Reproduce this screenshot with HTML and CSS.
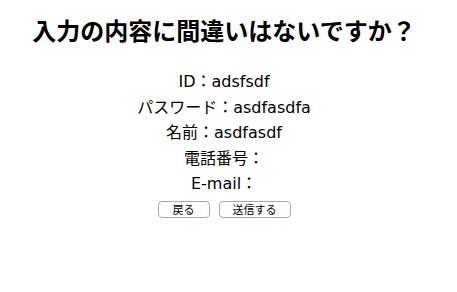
FILE: index.html
```html
<!DOCTYPE html>
<html lang="ja">
<head>
<meta charset="utf-8">
<link rel="stylesheet" href="styles.css">
</head>
<body>
<h1 class="title">入力の内容に間違いはないですか？</h1>
<div class="fields">
  <div class="row">ID：adsfsdf</div>
  <div class="row">パスワード：asdfasdfa</div>
  <div class="row">名前：asdfasdf</div>
  <div class="row">電話番号：</div>
  <div class="row">E-mail：</div>
</div>
<div class="actions">
  <button class="btn btn-back">戻る</button>
  <button class="btn btn-send">送信する</button>
</div>
</body>
</html>
```
FILE: styles.css
```css
body {
  margin: 0 17px 0 8px;
  padding-top: 15px;
  font-family: "DejaVu Sans", "Noto Sans CJK JP", sans-serif;
  color: #000;
  background: #fff;
}
.title {
  font-family: "Noto Sans CJK JP", sans-serif;
  font-size: 24px;
  font-weight: bold;
  text-align: center;
  margin: 0;
  line-height: 30px;
}
.fields {
  margin-top: 24px;
  text-align: center;
  font-size: 16px;
  line-height: 25.5px;
}
.actions {
  display: flex;
  justify-content: center;
  gap: 9px;
  margin-top: 4px;
}
.btn {
  font-family: "Noto Sans CJK JP", sans-serif;
  font-size: 11px;
  height: 17px;
  padding: 0;
  line-height: 15px;
  background: #fff;
  border: 1px solid #a9a9a9;
  border-radius: 4px;
  color: #000;
}
.btn-back { width: 52px; }
.btn-send { width: 72px; }
```
